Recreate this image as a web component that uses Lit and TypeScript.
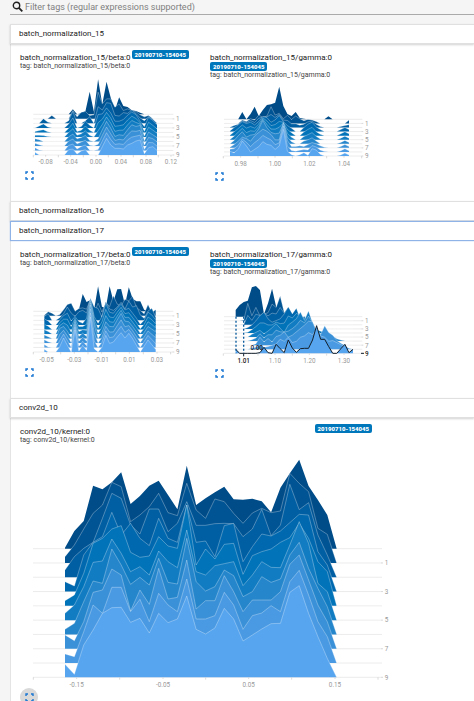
import { LitElement, html, css, svg, nothing } from "lit";
import { customElement, property } from "lit/decorators.js";

const ROWS = 10;
const RIDGE_COLORS = [
  "#004c88", "#005494", "#005ea2", "#0068ae", "#0073b9",
  "#127cc2", "#2686cc", "#3b91d8", "#4a9ae3", "#57a5ef",
];

interface Tick {
  x: number;
  label: string;
}

/** Chart geometry is expressed in thirds of a pixel. */
interface Histogram {
  width: number;
  height: number;
  x0: number;
  x1: number;
  top: number;
  bottom: number;
  gridStart: number;
  gridEnd: number;
  labelY: number;
  ticks: Tick[];
  minorTicks: number[];
  /** Bin heights by step; steps that are left out are blended. */
  steps: Record<number, number[]>;
  hover?: { tick: number; label: string; value: string; valueX: number; guides: number[] };
}

const lift = (tops: number[], step: number) =>
  tops.map((t) => Math.max(0, 281 + (386 * step) / 9 - t));

const BETA_15: Histogram = {
  width: 570, height: 288, x0: 45, x1: 411, top: 133, bottom: 255,
  gridStart: 40, gridEnd: 460, labelY: 283,
  ticks: [
    { x: 77, label: "-0.08" }, { x: 152, label: "-0.04" }, { x: 228, label: "0.00" },
    { x: 303, label: "0.04" }, { x: 378, label: "0.08" }, { x: 453, label: "0.12" },
  ],
  minorTicks: [40, 115, 190, 265, 340, 415],
  steps: {
    0: [0, 0, 0, 0, 0, 0, 0, 0, 0, 15, 0, 3, 10, 68, 8, 105, 30, 98, 50, 12, 51, 25, 22, 12, 10, 5, 0, 0, 0, 0],
    1: [0, 0, 0, 0, 10, 0, 0, 0, 0, 25, 6, 20, 22, 10, 12, 80, 45, 60, 60, 35, 45, 25, 30, 25, 22, 12, 6, 10, 0, 0],
    2: [0, 0, 14, 4, 0, 0, 0, 0, 8, 36, 0, 0, 8, 20, 0, 50, 40, 62, 60, 24, 22, 32, 30, 40, 30, 16, 8, 20, 12, 0],
    3: [0, 6, 12, 3, 0, 0, 0, 0, 12, 30, 0, 4, 20, 8, 0, 40, 42, 60, 45, 20, 20, 25, 38, 48, 40, 20, 4, 32, 22, 10],
    6: [8, 5, 0, 0, 0, 0, 0, 0, 14, 22, 8, 12, 18, 3, 0, 8, 35, 60, 40, 15, 20, 18, 35, 50, 45, 48, 2, 28, 20, 12],
    9: [8, 0, 0, 0, 0, 0, 0, 0, 16, 18, 3, 12, 16, 0, 0, 0, 25, 50, 30, 20, 20, 18, 30, 35, 42, 45, 4, 22, 25, 14],
  },
};

const GAMMA_15: Histogram = {
  width: 570, height: 264, x0: 60, x1: 417, top: 121, bottom: 231,
  gridStart: 42, gridEnd: 457, labelY: 261,
  ticks: [
    { x: 92, label: "0.98" }, { x: 195, label: "1.00" }, { x: 298, label: "1.02" }, { x: 402, label: "1.04" },
  ],
  minorTicks: [40, 144, 247, 350, 455],
  steps: {
    0: [0, 0, 0, 22, 0, 16, 38, 10, 28, 43, 45, 50, 98, 40, 16, 10, 22, 4, 2, 0, 0, 0, 0, 0, 9, 0, 0, 0, 0, 0],
    1: [0, 0, 0, 10, 6, 14, 10, 25, 18, 22, 50, 25, 30, 14, 24, 12, 22, 14, 8, 12, 10, 6, 0, 0, 0, 0, 0, 0, 0, 10],
    3: [2, 12, 20, 30, 24, 28, 20, 30, 45, 42, 28, 35, 48, 30, 18, 10, 0, 0, 12, 22, 28, 14, 6, 0, 0, 0, 0, 6, 12, 6],
    6: [0, 10, 24, 36, 20, 26, 28, 44, 70, 48, 34, 30, 32, 60, 20, 6, 0, 0, 8, 12, 18, 8, 0, 0, 0, 0, 0, 4, 10, 4],
    7: [2, 10, 20, 32, 28, 20, 36, 46, 56, 50, 40, 24, 24, 76, 22, 4, 4, 6, 4, 10, 16, 12, 6, 2, 0, 0, 0, 4, 10, 4],
    9: [14, 10, 20, 45, 30, 12, 20, 28, 43, 35, 32, 20, 30, 80, 14, 4, 0, 4, 10, 2, 22, 18, 5, 0, 0, 0, 0, 3, 9, 3],
  },
};

const BETA_17: Histogram = {
  width: 570, height: 288, x0: 73, x1: 407, top: 133, bottom: 255,
  gridStart: 40, gridEnd: 460, labelY: 285,
  ticks: [
    { x: 80, label: "-0.05" }, { x: 163, label: "-0.03" }, { x: 245, label: "-0.01" },
    { x: 328, label: "0.01" }, { x: 411, label: "0.03" },
  ],
  minorTicks: [40, 122, 204, 287, 370, 452],
  steps: {
    0: [0, 0, 0, 0, 0, 0, 12, 22, 0, 5, 52, 28, 34, 8, 75, 14, 10, 75, 30, 66, 67, 20, 72, 38, 30, 30, 5, 0, 0, 0],
    1: [2, 12, 8, 0, 4, 18, 34, 38, 14, 22, 24, 20, 50, 10, 38, 12, 40, 28, 60, 35, 30, 50, 45, 58, 25, 16, 6, 34, 10, 18],
    2: [12, 20, 0, 0, 8, 20, 40, 22, 12, 26, 30, 22, 66, 40, 36, 10, 56, 34, 30, 40, 54, 34, 58, 40, 44, 16, 6, 28, 36, 10],
    3: [18, 12, 0, 0, 15, 28, 35, 12, 25, 10, 5, 20, 80, 25, 5, 25, 65, 38, 35, 50, 62, 45, 50, 35, 20, 2, 14, 38, 30, 15],
    6: [10, 5, 0, 0, 30, 36, 22, 2, 50, 6, 16, 6, 100, 40, 0, 18, 50, 36, 35, 56, 75, 52, 50, 36, 20, 2, 18, 36, 28, 20],
    9: [8, 0, 0, 0, 16, 42, 20, 0, 66, 3, 20, 5, 105, 10, 0, 14, 50, 26, 30, 45, 58, 42, 56, 40, 20, 0, 18, 36, 22, 8],
  },
};

const GAMMA_17: Histogram = {
  width: 570, height: 264, x0: 77, x1: 429, top: 122, bottom: 232,
  gridStart: 42, gridEnd: 457, labelY: 262,
  ticks: [
    { x: 195, label: "1.10" }, { x: 298, label: "1.20" }, { x: 402, label: "1.30" },
  ],
  minorTicks: [40, 144, 247, 350],
  steps: {
    0: [20, 35, 44, 48, 88, 92, 80, 8, 40, 84, 30, 14, 0, 0, 0, 0, 0, 0, 0, 0, 0, 0, 0, 0, 0, 0, 0, 0, 0, 0],
    1: [0, 0, 2, 52, 15, 40, 15, 20, 24, 50, 40, 74, 25, 40, 18, 10, 0, 0, 0, 0, 0, 0, 0, 0, 0, 0, 0, 0, 0, 0],
    3: [0, 0, 0, 4, 12, 24, 40, 50, 30, 20, 25, 30, 45, 66, 45, 62, 30, 38, 14, 0, 0, 0, 0, 0, 0, 0, 0, 0, 0, 0],
    5: [0, 0, 0, 0, 8, 14, 20, 10, 18, 28, 40, 26, 14, 36, 45, 55, 75, 50, 78, 42, 20, 10, 4, 0, 0, 0, 0, 0, 0, 0],
    7: [0, 0, 0, 0, 0, 4, 24, 10, 20, 10, 26, 30, 40, 24, 30, 40, 50, 60, 72, 70, 40, 32, 58, 38, 30, 14, 6, 0, 0, 0],
    8: [0, 0, 0, 0, 4, 6, 14, 6, 8, 12, 16, 30, 24, 36, 20, 24, 36, 40, 50, 44, 60, 40, 36, 24, 26, 20, 14, 10, 3, 0],
    9: [12, 0, 0, 0, 0, 0, 2, 18, 2, 0, 27, 14, 2, 40, 16, 3, 14, 15, 15, 40, 83, 42, 42, 20, 0, 0, 14, 27, 2, 12],
  },
  hover: { tick: 101, label: "1.01", value: "0.00", valueX: 140, guides: [78, 101] },
};

const KERNEL: Histogram = {
  width: 1110, height: 729, x0: 135, x1: 950, top: 311, bottom: 697,
  gridStart: 39, gridEnd: 1086, labelY: 727,
  ticks: [
    { x: 170, label: "-0.15" }, { x: 429, label: "-0.05" }, { x: 686, label: "0.05" }, { x: 945, label: "0.15" },
  ],
  minorTicks: [40, 299, 557, 815, 1074],
  steps: {
    0: lift([278, 228, 198, 92, 103, 82, 52, 147, 123, 92, 77, 120, 163, 32, 150, 130, 112, 95, 133, 134, 131, 139, 172, 98, 55, 14, 93, 135, 180, 281], 0),
    1: lift([305, 270, 222, 175, 150, 82, 95, 200, 180, 155, 115, 173, 182, 85, 165, 190, 132, 140, 175, 205, 174, 160, 173, 168, 55, 85, 110, 220, 238, 324], 1),
    2: lift([345, 305, 280, 262, 190, 115, 130, 210, 237, 162, 162, 230, 205, 140, 211, 211, 206, 205, 206, 245, 222, 163, 242, 210, 88, 164, 143, 240, 300, 367], 2),
    3: lift([380, 393, 300, 262, 245, 172, 240, 205, 250, 272, 190, 250, 262, 150, 262, 258, 305, 212, 205, 320, 275, 237, 243, 228, 203, 178, 180, 290, 330, 410], 3),
    4: lift([437, 420, 355, 265, 250, 222, 212, 292, 307, 303, 245, 273, 280, 150, 330, 282, 312, 268, 265, 358, 302, 290, 282, 262, 248, 205, 250, 320, 350, 453], 4),
    5: lift([475, 450, 395, 322, 318, 252, 295, 350, 335, 360, 288, 320, 338, 225, 350, 360, 332, 326, 320, 392, 360, 320, 337, 338, 270, 200, 265, 385, 410, 496], 5),
    6: lift([523, 505, 440, 378, 385, 282, 330, 388, 367, 390, 310, 382, 387, 250, 380, 408, 395, 345, 362, 425, 410, 365, 382, 372, 300, 262, 340, 400, 455, 538], 6),
    7: lift([540, 557, 500, 412, 405, 342, 360, 468, 405, 448, 340, 432, 427, 315, 462, 437, 437, 362, 410, 470, 435, 435, 435, 410, 328, 300, 375, 450, 500, 581], 7),
    8: lift([597, 605, 530, 450, 475, 397, 397, 470, 433, 500, 415, 450, 470, 372, 492, 492, 482, 412, 450, 523, 482, 474, 452, 470, 380, 346, 420, 500, 545, 625], 8),
    9: lift([628, 658, 570, 525, 475, 458, 457, 502, 490, 534, 475, 503, 492, 423, 523, 537, 519, 460, 492, 558, 540, 522, 506, 505, 412, 392, 475, 545, 610, 667], 9),
  },
};

function heightsAt(h: Histogram, step: number): number[] {
  if (h.steps[step]) return h.steps[step];
  const known = Object.keys(h.steps).map(Number).sort((a, b) => a - b);
  const lo = known.filter((k) => k < step).pop()!;
  const hi = known.find((k) => k > step)!;
  const t = (step - lo) / (hi - lo);
  return h.steps[lo].map((v, i) => v * (1 - t) + h.steps[hi][i] * t);
}

@customElement("ridge-chart")
class RidgeChart extends LitElement {
  @property({ attribute: false }) data!: Histogram;

  static styles = css`
    :host { display: block; }
    svg { display: block; overflow: visible; }
    .grid { stroke: #e2e2e2; stroke-width: 2; }
    .tick { stroke: #c8c8c8; stroke-width: 2; }
    .ridge { stroke: none; }
    .crest { fill: none; stroke: #fff; stroke-opacity: 0.45; stroke-width: 2; }
    .crest.active { stroke: #14202c; stroke-opacity: 1; stroke-width: 3; }
    .guide { stroke: #0b5c9e; stroke-width: 4; stroke-dasharray: 6 6; }
    text { font: 19px Roboto, sans-serif; fill: #999; }
    .strong { fill: #222; font-weight: 500; }
  `;

  render() {
    const d = this.data;
    const base = (i: number) => d.top + ((d.bottom - d.top) * i) / (ROWS - 1);
    const rows = [...Array(ROWS).keys()];
    const points = (i: number) => {
      const hs = heightsAt(d, i);
      return hs
        .map((v, k) => `${(d.x0 + ((d.x1 - d.x0) * k) / (hs.length - 1)).toFixed(1)},${(base(i) - v).toFixed(1)}`)
        .join(" ");
    };
    const last = ROWS - 1;
    return html`<svg
      width=${d.width / 3}
      height=${d.height / 3}
      viewBox="0 0 ${d.width} ${d.height}"
      role="img"
      aria-label="Histogram over steps"
    >
      ${rows.map((i) => svg`
        <line class="grid" x1=${d.gridStart} x2=${d.gridEnd} y1=${base(i)} y2=${base(i)} />
        ${i % 2 ? svg`
          <line class="tick" x1=${d.gridEnd - 2} x2=${d.gridEnd + 3} y1=${base(i)} y2=${base(i)} />
          <text class=${d.hover && i === last ? "strong" : ""} x=${d.gridEnd + 8} y=${base(i) + 7}>${i}</text>` : nothing}`)}
      ${rows.map((i) => svg`
        <polygon class="ridge" fill=${RIDGE_COLORS[i]}
          points="${d.x0},${base(i)} ${points(i)} ${d.x1},${base(i)}" />
        ${i ? svg`<polyline class=${d.hover && i === last ? "crest active" : "crest"} points=${points(i)} />` : nothing}`)}
      ${d.minorTicks.map((x) => svg`<line class="tick" x1=${x} x2=${x} y1=${d.bottom} y2=${d.bottom + 7} />`)}
      ${d.ticks.map((t) => svg`
        <line class="tick" x1=${t.x} x2=${t.x} y1=${d.bottom} y2=${d.bottom + 5} />
        <text x=${t.x} y=${d.labelY} text-anchor="middle">${t.label}</text>`)}
      ${d.hover ? svg`
        ${d.hover.guides.map((x) => svg`<line class="guide" x1=${x} x2=${x} y1=${d.top} y2=${d.bottom} />`)}
        <line class="crest active" x1=${d.gridEnd - 4} x2=${d.gridEnd + 5} y1=${d.bottom} y2=${d.bottom} />
        <line class="crest active" x1=${d.hover.tick} x2=${d.hover.tick} y1=${d.bottom} y2=${d.bottom + 9} />
        <text class="strong" x=${d.hover.tick} y=${d.labelY} text-anchor="middle">${d.hover.label}</text>
        <text class="strong" x=${d.hover.valueX} y=${d.bottom - 10} text-anchor="middle">${d.hover.value}</text>` : nothing}
    </svg>`;
  }
}

@customElement("histogram-card")
class HistogramCard extends LitElement {
  @property() tag = "";
  @property({ type: Boolean }) wide = false;
  @property({ type: Boolean }) pressed = false;
  @property({ attribute: false }) data!: Histogram;

  static styles = css`
    :host { display: flex; flex-direction: column; width: 190px; }
    :host([wide]) { width: 352px; }
    .heading { display: flex; flex-wrap: wrap; column-gap: 1px; align-items: flex-start; max-width: 172px; }
    :host([wide]) .heading { justify-content: space-between; max-width: none; }
    .title { font-size: 8px; line-height: 9px; color: #212121; padding-top: 3px; }
    .run {
      font-size: 6px; line-height: 9px; font-weight: 900; color: #fff;
      background: #0077bb; border-radius: 2px; padding: 0 3px;
    }
    .tag { font-size: 7px; line-height: 8px; color: #424242; }
    :host([wide]) ridge-chart { margin-top: 1px; }
    .expand {
      width: 18px; height: 18px; padding: 0; border: 0; border-radius: 50%;
      background: none; display: grid; place-items: center; color: #1976d2;
    }
    .expand.pressed { background: #d9d9d9; }
  `;

  render() {
    return html`
      <div class="heading">
        <span class="title">${this.tag}</span>
        <span class="run">20190710-154045</span>
      </div>
      <span class="tag">tag: ${this.tag}</span>
      <ridge-chart .data=${this.data}></ridge-chart>
      <button class="expand ${this.pressed ? "pressed" : ""}" aria-label="Toggle full size">
        <svg width="9" height="9" viewBox="0 0 9 9" fill="none" stroke="currentColor" stroke-width="1.4">
          <path d="M1 3V1H3M6 1H8V3M8 6V8H6M3 8H1V6" />
        </svg>
      </button>
    `;
  }
}

@customElement("app-root")
class AppRoot extends LitElement {
  static styles = css`
    :host {
      display: block; height: 100vh; overflow: hidden; box-sizing: border-box;
      padding-left: 10px; background: #f5f5f5; font-family: Roboto, sans-serif;
    }
    .search { display: flex; align-items: center; gap: 2px; height: 13px; border-bottom: 1px solid #aaa; padding: 0 0 1px 2px; margin-bottom: 9px; }
    .search svg { flex: none; }
    .search input {
      flex: 1; min-width: 0; border: 0; padding: 0; outline: 0; background: none;
      font: 9px/12px Roboto, sans-serif; color: #212121;
    }
    .search input::placeholder { color: #808080; opacity: 1; }
    .bar {
      display: block; width: 100%; box-sizing: border-box; height: 20px; padding: 0 8px;
      border: 1px solid #e0e0e0; border-right: 0; background: #fff; text-align: left;
      font: 8px/18px Roboto, sans-serif; color: #212121;
      box-shadow: 0 1px 2px rgba(0, 0, 0, 0.18); position: relative;
    }
    .bar.focused { border-color: #8fb3e6; box-shadow: 0 0 1px #8fb3e6; }
    .pane {
      display: flex; align-items: flex-start; box-sizing: border-box; min-height: 157px;
      background: #fff; border-left: 1px solid #e4e4e4; padding: 6px 0 0 9px;
    }
  `;

  render() {
    return html`
      <label class="search">
        <svg width="11" height="11" viewBox="0 0 11 11" fill="none" stroke="#212121" stroke-width="1.4">
          <circle cx="4.5" cy="4.5" r="3.2" />
          <path d="M6.9 6.9L10.3 10.3" stroke-width="1.8" />
        </svg>
        <input type="text" placeholder="Filter tags (regular expressions supported)" aria-label="Filter tags" />
      </label>
      <button class="bar">batch_normalization_15</button>
      <div class="pane">
        <histogram-card tag="batch_normalization_15/beta:0" .data=${BETA_15}></histogram-card>
        <histogram-card tag="batch_normalization_15/gamma:0" .data=${GAMMA_15}></histogram-card>
      </div>
      <button class="bar">batch_normalization_16</button>
      <button class="bar focused">batch_normalization_17</button>
      <div class="pane">
        <histogram-card tag="batch_normalization_17/beta:0" .data=${BETA_17}></histogram-card>
        <histogram-card tag="batch_normalization_17/gamma:0" .data=${GAMMA_17}></histogram-card>
      </div>
      <button class="bar">conv2d_10</button>
      <div class="pane">
        <histogram-card wide pressed tag="conv2d_10/kernel:0" .data=${KERNEL}></histogram-card>
      </div>
    `;
  }
}
